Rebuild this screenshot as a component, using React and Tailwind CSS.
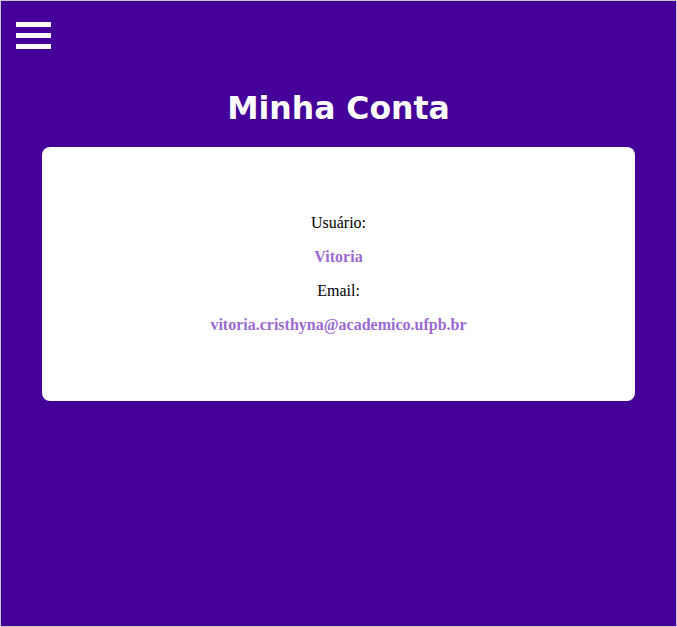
import React from 'react';

function MenuIcon() {
  return (
    <button className="flex flex-col gap-[6px] w-[35px]">
      <span className="block h-[5px] w-[35px] bg-white" />
      <span className="block h-[5px] w-[35px] bg-white" />
      <span className="block h-[5px] w-[35px] bg-white" />
    </button>
  );
}

export default function App() {
  return (
    <div className="w-[677px] h-[627px] border border-[#c8c8c8] bg-[#440099] overflow-hidden">
      <header className="pt-[21px] pl-[15px]">
        <MenuIcon />
      </header>

      <h1 className="mt-[41px] text-center text-white font-bold text-[31.5px] leading-[37px] font-['DejaVu_Sans',sans-serif]">
        Minha Conta
      </h1>

      <div className="mx-[41px] mt-[20px] bg-white rounded-[8px] h-[254px] flex flex-col items-center justify-center gap-4 font-['Liberation_Serif',serif] text-[16px] leading-[18px]">
        <p className="text-black">Usuário:</p>
        <p className="font-bold text-[#9a6ad2]">Vitoria</p>
        <p className="text-black">Email:</p>
        <p className="font-bold text-[#9a6ad2]">vitoria.cristhyna@academico.ufpb.br</p>
      </div>
    </div>
  );
}
